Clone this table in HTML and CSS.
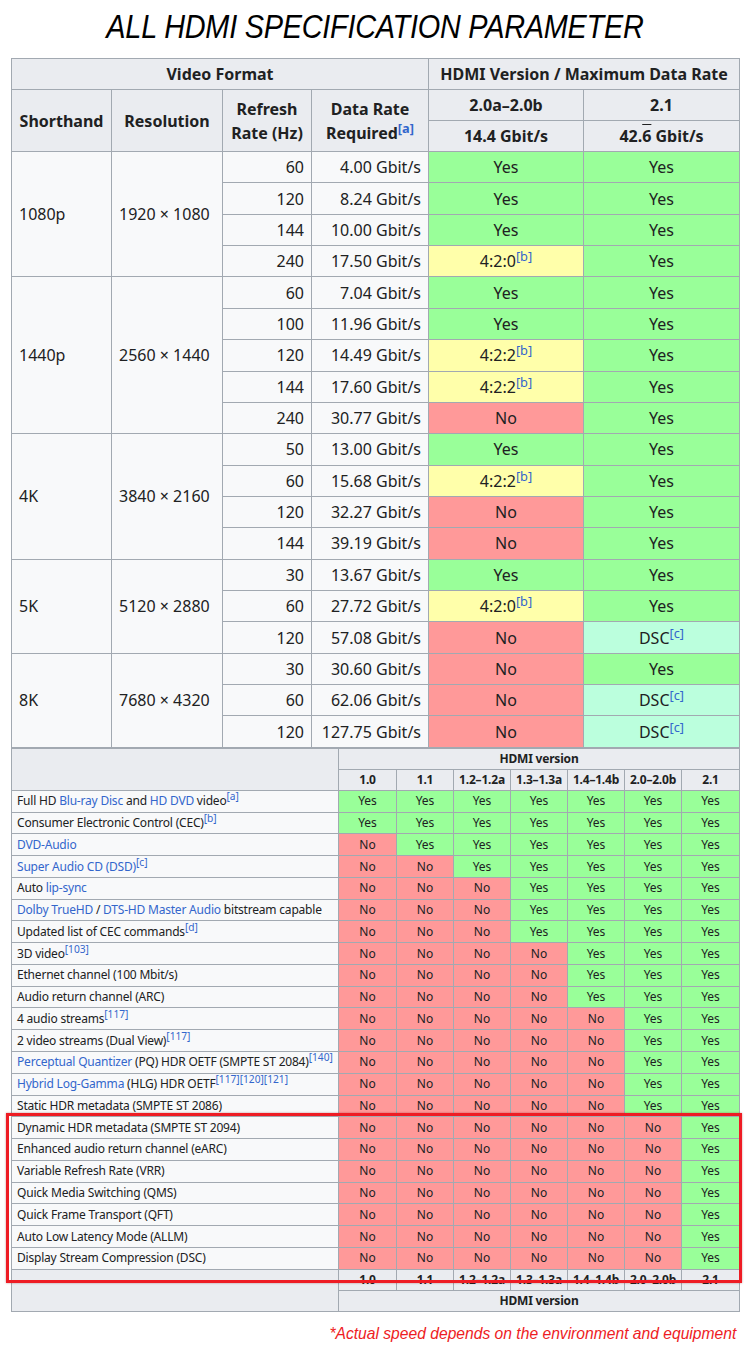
FILE: index.html
```html
<!DOCTYPE html>
<html>
<head>
<meta charset="utf-8">
<link rel="stylesheet" href="styles.css">
</head>
<body>
<div class="page">
  <h1 class="title"><span class="title-text">ALL HDMI SPECIFICATION PARAMETER</span></h1>
  <div class="tables">
    <table class="rates">
      <colgroup>
        <col class="c-short"><col class="c-res"><col class="c-ref"><col class="c-dr"><col class="c-v20"><col class="c-v21">
      </colgroup>
      <thead>
        <tr class="h1">
          <th colspan="4">Video Format</th>
          <th colspan="2">HDMI Version / Maximum Data Rate</th>
        </tr>
        <tr class="h2">
          <th rowspan="2">Shorthand</th>
          <th rowspan="2">Resolution</th>
          <th rowspan="2">Refresh<br>Rate (Hz)</th>
          <th rowspan="2">Data Rate<br>Required<sup class="ref">[a]</sup></th>
          <th>2.0a–2.0b</th>
          <th>2.1</th>
        </tr>
        <tr class="h3">
          <th>14.4 Gbit/s</th>
          <th>42.<span class="ovl">6</span> Gbit/s</th>
        </tr>
      </thead>
      <tbody>
        <tr><td rowspan="4" class="lbl">1080p</td><td rowspan="4" class="lbl">1920 × 1080</td><td class="num">60</td><td class="num">4.00 Gbit/s</td><td class="y">Yes</td><td class="y">Yes</td></tr>
        <tr><td class="num">120</td><td class="num">8.24 Gbit/s</td><td class="y">Yes</td><td class="y">Yes</td></tr>
        <tr><td class="num">144</td><td class="num">10.00 Gbit/s</td><td class="y">Yes</td><td class="y">Yes</td></tr>
        <tr><td class="num">240</td><td class="num">17.50 Gbit/s</td><td class="p">4:2:0<sup class="ref">[b]</sup></td><td class="y">Yes</td></tr>

        <tr><td rowspan="5" class="lbl">1440p</td><td rowspan="5" class="lbl">2560 × 1440</td><td class="num">60</td><td class="num">7.04 Gbit/s</td><td class="y">Yes</td><td class="y">Yes</td></tr>
        <tr><td class="num">100</td><td class="num">11.96 Gbit/s</td><td class="y">Yes</td><td class="y">Yes</td></tr>
        <tr><td class="num">120</td><td class="num">14.49 Gbit/s</td><td class="p">4:2:2<sup class="ref">[b]</sup></td><td class="y">Yes</td></tr>
        <tr><td class="num">144</td><td class="num">17.60 Gbit/s</td><td class="p">4:2:2<sup class="ref">[b]</sup></td><td class="y">Yes</td></tr>
        <tr><td class="num">240</td><td class="num">30.77 Gbit/s</td><td class="n">No</td><td class="y">Yes</td></tr>

        <tr><td rowspan="4" class="lbl">4K</td><td rowspan="4" class="lbl">3840 × 2160</td><td class="num">50</td><td class="num">13.00 Gbit/s</td><td class="y">Yes</td><td class="y">Yes</td></tr>
        <tr><td class="num">60</td><td class="num">15.68 Gbit/s</td><td class="p">4:2:2<sup class="ref">[b]</sup></td><td class="y">Yes</td></tr>
        <tr><td class="num">120</td><td class="num">32.27 Gbit/s</td><td class="n">No</td><td class="y">Yes</td></tr>
        <tr><td class="num">144</td><td class="num">39.19 Gbit/s</td><td class="n">No</td><td class="y">Yes</td></tr>

        <tr><td rowspan="3" class="lbl">5K</td><td rowspan="3" class="lbl">5120 × 2880</td><td class="num">30</td><td class="num">13.67 Gbit/s</td><td class="y">Yes</td><td class="y">Yes</td></tr>
        <tr><td class="num">60</td><td class="num">27.72 Gbit/s</td><td class="p">4:2:0<sup class="ref">[b]</sup></td><td class="y">Yes</td></tr>
        <tr><td class="num">120</td><td class="num">57.08 Gbit/s</td><td class="n">No</td><td class="d">DSC<sup class="ref">[c]</sup></td></tr>

        <tr><td rowspan="3" class="lbl">8K</td><td rowspan="3" class="lbl">7680 × 4320</td><td class="num">30</td><td class="num">30.60 Gbit/s</td><td class="n">No</td><td class="y">Yes</td></tr>
        <tr><td class="num">60</td><td class="num">62.06 Gbit/s</td><td class="n">No</td><td class="d">DSC<sup class="ref">[c]</sup></td></tr>
        <tr><td class="num">120</td><td class="num">127.75 Gbit/s</td><td class="n">No</td><td class="d">DSC<sup class="ref">[c]</sup></td></tr>
      </tbody>
    </table>

    <table class="features">
      <colgroup>
        <col class="f-name"><col class="f-v"><col class="f-v"><col class="f-v"><col class="f-v"><col class="f-v"><col class="f-v"><col class="f-v">
      </colgroup>
      <thead>
        <tr class="fh"><th rowspan="2"></th><th colspan="7">HDMI version</th></tr>
        <tr class="fh"><th>1.0</th><th>1.1</th><th>1.2–1.2a</th><th>1.3–1.3a</th><th>1.4–1.4b</th><th>2.0–2.0b</th><th>2.1</th></tr>
      </thead>
      <tbody>
        <tr><td class="name">Full HD <a>Blu-ray Disc</a> and <a>HD DVD</a> video<sup class="ref">[a]</sup></td><td class="y">Yes</td><td class="y">Yes</td><td class="y">Yes</td><td class="y">Yes</td><td class="y">Yes</td><td class="y">Yes</td><td class="y">Yes</td></tr>
        <tr><td class="name">Consumer Electronic Control (CEC)<sup class="ref">[b]</sup></td><td class="y">Yes</td><td class="y">Yes</td><td class="y">Yes</td><td class="y">Yes</td><td class="y">Yes</td><td class="y">Yes</td><td class="y">Yes</td></tr>
        <tr><td class="name"><a>DVD-Audio</a></td><td class="n">No</td><td class="y">Yes</td><td class="y">Yes</td><td class="y">Yes</td><td class="y">Yes</td><td class="y">Yes</td><td class="y">Yes</td></tr>
        <tr><td class="name"><a>Super Audio CD (DSD)</a><sup class="ref">[c]</sup></td><td class="n">No</td><td class="n">No</td><td class="y">Yes</td><td class="y">Yes</td><td class="y">Yes</td><td class="y">Yes</td><td class="y">Yes</td></tr>
        <tr><td class="name">Auto <a>lip-sync</a></td><td class="n">No</td><td class="n">No</td><td class="n">No</td><td class="y">Yes</td><td class="y">Yes</td><td class="y">Yes</td><td class="y">Yes</td></tr>
        <tr><td class="name"><a>Dolby TrueHD</a> / <a>DTS-HD Master Audio</a> bitstream capable</td><td class="n">No</td><td class="n">No</td><td class="n">No</td><td class="y">Yes</td><td class="y">Yes</td><td class="y">Yes</td><td class="y">Yes</td></tr>
        <tr><td class="name">Updated list of CEC commands<sup class="ref">[d]</sup></td><td class="n">No</td><td class="n">No</td><td class="n">No</td><td class="y">Yes</td><td class="y">Yes</td><td class="y">Yes</td><td class="y">Yes</td></tr>
        <tr><td class="name">3D video<sup class="ref">[103]</sup></td><td class="n">No</td><td class="n">No</td><td class="n">No</td><td class="n">No</td><td class="y">Yes</td><td class="y">Yes</td><td class="y">Yes</td></tr>
        <tr><td class="name">Ethernet channel (100 Mbit/s)</td><td class="n">No</td><td class="n">No</td><td class="n">No</td><td class="n">No</td><td class="y">Yes</td><td class="y">Yes</td><td class="y">Yes</td></tr>
        <tr><td class="name">Audio return channel (ARC)</td><td class="n">No</td><td class="n">No</td><td class="n">No</td><td class="n">No</td><td class="y">Yes</td><td class="y">Yes</td><td class="y">Yes</td></tr>
        <tr><td class="name">4 audio streams<sup class="ref">[117]</sup></td><td class="n">No</td><td class="n">No</td><td class="n">No</td><td class="n">No</td><td class="n">No</td><td class="y">Yes</td><td class="y">Yes</td></tr>
        <tr><td class="name">2 video streams (Dual View)<sup class="ref">[117]</sup></td><td class="n">No</td><td class="n">No</td><td class="n">No</td><td class="n">No</td><td class="n">No</td><td class="y">Yes</td><td class="y">Yes</td></tr>
        <tr><td class="name"><a>Perceptual Quantizer</a> (PQ) HDR OETF (SMPTE ST 2084)<sup class="ref">[140]</sup></td><td class="n">No</td><td class="n">No</td><td class="n">No</td><td class="n">No</td><td class="n">No</td><td class="y">Yes</td><td class="y">Yes</td></tr>
        <tr><td class="name"><a>Hybrid Log-Gamma</a> (HLG) HDR OETF<sup class="ref">[117][120][121]</sup></td><td class="n">No</td><td class="n">No</td><td class="n">No</td><td class="n">No</td><td class="n">No</td><td class="y">Yes</td><td class="y">Yes</td></tr>
        <tr><td class="name">Static HDR metadata (SMPTE ST 2086)</td><td class="n">No</td><td class="n">No</td><td class="n">No</td><td class="n">No</td><td class="n">No</td><td class="y">Yes</td><td class="y">Yes</td></tr>
        <tr><td class="name">Dynamic HDR metadata (SMPTE ST 2094)</td><td class="n">No</td><td class="n">No</td><td class="n">No</td><td class="n">No</td><td class="n">No</td><td class="n">No</td><td class="y">Yes</td></tr>
        <tr><td class="name">Enhanced audio return channel (eARC)</td><td class="n">No</td><td class="n">No</td><td class="n">No</td><td class="n">No</td><td class="n">No</td><td class="n">No</td><td class="y">Yes</td></tr>
        <tr><td class="name">Variable Refresh Rate (VRR)</td><td class="n">No</td><td class="n">No</td><td class="n">No</td><td class="n">No</td><td class="n">No</td><td class="n">No</td><td class="y">Yes</td></tr>
        <tr><td class="name">Quick Media Switching (QMS)</td><td class="n">No</td><td class="n">No</td><td class="n">No</td><td class="n">No</td><td class="n">No</td><td class="n">No</td><td class="y">Yes</td></tr>
        <tr><td class="name">Quick Frame Transport (QFT)</td><td class="n">No</td><td class="n">No</td><td class="n">No</td><td class="n">No</td><td class="n">No</td><td class="n">No</td><td class="y">Yes</td></tr>
        <tr><td class="name">Auto Low Latency Mode (ALLM)</td><td class="n">No</td><td class="n">No</td><td class="n">No</td><td class="n">No</td><td class="n">No</td><td class="n">No</td><td class="y">Yes</td></tr>
        <tr><td class="name">Display Stream Compression (DSC)</td><td class="n">No</td><td class="n">No</td><td class="n">No</td><td class="n">No</td><td class="n">No</td><td class="n">No</td><td class="y">Yes</td></tr>
      </tbody>
      <tfoot>
        <tr class="fh"><th rowspan="2"></th><th>1.0</th><th>1.1</th><th>1.2–1.2a</th><th>1.3–1.3a</th><th>1.4–1.4b</th><th>2.0–2.0b</th><th>2.1</th></tr>
        <tr class="fh"><th colspan="7">HDMI version</th></tr>
      </tfoot>
    </table>
    <div class="highlight"></div>
  </div>
  <p class="note"><span class="note-text">*Actual speed depends on the environment and equipment</span></p>
</div>
</body>
</html>
```

FILE: styles.css
```css
html, body {
  margin: 0;
  padding: 0;
  background: #ffffff;
}

.page {
  width: 750px;
  font-family: "Noto Sans", "Open Sans", sans-serif;
  color: #202122;
}

.title {
  margin: 0;
  height: 58px;
  padding-top: 7px;
  box-sizing: border-box;
  text-align: center;
  font-family: "Liberation Sans", Arial, sans-serif;
  font-style: italic;
  font-weight: normal;
  font-size: 33px;
  line-height: 40px;
  color: #000;
}

.title-text {
  display: inline-block;
  letter-spacing: -0.3px;
  transform: scaleX(0.875);
  transform-origin: center;
}

.tables {
  position: relative;
  margin-left: 11px;
  width: 728px;
}

table {
  border-collapse: collapse;
  table-layout: fixed;
  width: 728px;
}

th, td {
  border: 1px solid #a2a9b1;
  padding: 0;
  overflow: hidden;
  white-space: nowrap;
}

/* ---------- Data rate table ---------- */
.rates {
  font-size: 16px;
}

.c-short { width: 100px; }
.c-res { width: 111px; }
.c-ref { width: 89px; }
.c-dr { width: 117px; }
.c-v20 { width: 155px; }
.c-v21 { width: 156px; }

.rates th {
  background: #eaecf0;
  font-weight: bold;
  text-align: center;
  line-height: 24px;
}

.rates .h1, .rates .h2, .rates .h3 {
  height: 31px;
}

.rates tbody tr {
  height: 31.37px;
}

.rates td {
  background: #f8f9fa;
  line-height: 22px;
}

.rates .lbl {
  text-align: left;
  padding-left: 7px;
}

.rates .num {
  text-align: right;
  padding-right: 7px;
}

.ovl {
  text-decoration: overline;
}

td.y { background: #99ff99; text-align: center; }
td.n { background: #ff9999; text-align: center; }
td.p { background: #ffffaa; text-align: center; }
td.d { background: #bbffdd; text-align: center; }

.ref {
  color: #3366cc;
  font-size: 0.8em;
  line-height: 0;
  vertical-align: 0.45em;
}

/* ---------- Feature table ---------- */
.features {
  font-size: 12px;
}

.f-name { width: 327px; }
.f-v { width: 57px; }
.features col.f-v:nth-child(2),
.features col.f-v:nth-child(8) { width: 58px; }

.features th {
  background: #eaecf0;
  font-weight: bold;
  text-align: center;
  line-height: 16px;
  letter-spacing: -0.2px;
}

.features .fh {
  height: 21px;
}

.features tbody tr {
  height: 21.77px;
}

.features td {
  line-height: 16px;
}

.features .name {
  background: #f8f9fa;
  text-align: left;
  padding-left: 5px;
  letter-spacing: -0.2px;
}

.features a {
  color: #3366cc;
  text-decoration: none;
}

.features .ref {
  font-size: 0.85em;
  letter-spacing: 0;
}

.highlight {
  position: absolute;
  left: -5px;
  top: 1055px;
  width: 736px;
  height: 170px;
  box-sizing: border-box;
  border: 3px solid #ee1c24;
  box-shadow: 0 0 2px rgba(120, 0, 0, 0.4);
  pointer-events: none;
}

.note {
  margin: 0;
  padding-top: 11px;
  padding-right: 14px;
  text-align: right;
  font-family: "Liberation Sans", Arial, sans-serif;
  font-style: italic;
  font-size: 17px;
  line-height: 22px;
  color: #ee1c24;
}

.note-text {
  display: inline-block;
  transform: scaleX(0.92);
  transform-origin: right center;
}
```
